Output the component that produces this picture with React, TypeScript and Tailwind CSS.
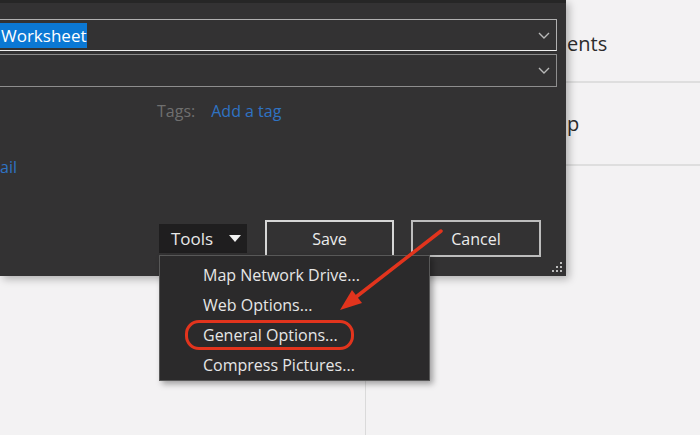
import React from "react";

const menuItems = ["Map Network Drive...", "Web Options...", "General Options...", "Compress Pictures..."];

function Chevron() {
  return (
    <svg width="12" height="7" viewBox="0 0 12 7" className="shrink-0">
      <path d="M1 1l5 5 5-5" fill="none" stroke="#b8b8b8" strokeWidth="1.4" />
    </svg>
  );
}

function Dialog() {
  return (
    <div className="relative z-10 h-[276px] bg-[#333233] shadow-[3px_3px_8px_rgba(0,0,0,0.28)] flex flex-col text-[#e8e8e8]">
      <div className="h-[3px] bg-[#262626]" />
      <div className="mt-[16px] -ml-px w-[558px] h-[32px] border border-[#b0b0b0] border-b-[#f2f2f2] flex items-center justify-between pr-[6px]">
        <span className="bg-[#0b78d4] text-white text-[17px] leading-[25px] pl-[1px] pr-[1px]">Worksheet</span>
        <Chevron />
      </div>
      <div className="mt-[3px] -ml-px w-[558px] h-[33px] border border-[#8e8e8e] flex items-center justify-end pr-[6px]">
        <Chevron />
      </div>
      <div className="mt-[12px] ml-[157px] flex items-center gap-[16px] h-[24px] text-[16px]">
        <span className="text-[#6f6f6f]">Tags:</span>
        <span className="text-[#2f73c4]">Add a tag</span>
      </div>
      <div className="mt-[32px] h-[24px] flex items-center text-[16px] text-[#2f73c4]">ail</div>
      <div className="mt-[41px] flex items-center">
        <div className="ml-[159px] w-[88px] h-[29px] bg-[#1f1e1f] flex items-center justify-between pl-[12px] pr-[6px] text-[17px]">
          <span>Tools</span>
          <svg width="12" height="7" viewBox="0 0 12 7">
            <path d="M0 0h12L6 7z" fill="#f2f2f2" />
          </svg>
        </div>
        <button className="ml-[18px] w-[129px] h-[37px] border-2 border-[#d6d6d6] text-[16px] text-[#ececec]">Save</button>
        <button className="ml-[17px] w-[130px] h-[37px] border-2 border-[#bdbdbd] text-[16px] text-[#ececec]">Cancel</button>
      </div>
      <svg width="11" height="11" viewBox="0 0 11 11" className="absolute right-[3px] bottom-[3px]">
        <g fill="#bdbdbd">
          <rect x="8" y="0" width="2" height="2" />
          <rect x="4" y="4" width="2" height="2" />
          <rect x="8" y="4" width="2" height="2" />
          <rect x="0" y="8" width="2" height="2" />
          <rect x="4" y="8" width="2" height="2" />
          <rect x="8" y="8" width="2" height="2" />
        </g>
      </svg>
    </div>
  );
}

export default function App() {
  return (
    <div className="relative w-[700px] h-[435px] overflow-hidden bg-[#f3f2f3] flex font-['Open_Sans','Liberation_Sans',sans-serif]">
      <div className="w-[566px] shrink-0 flex flex-col">
        <Dialog />
        <div className="flex-1 w-[366px] border-r border-[#dadada]" />
      </div>
      <div className="flex-1 flex flex-col text-[20px] text-[#2c2c2c]">
        <div className="h-[83px] border-b-2 border-[#dedede] flex items-center pt-[6px]">
          <span className="pl-px">ents</span>
        </div>
        <div className="h-[83px] border-b-2 border-[#dedede] flex items-center">
          <span className="pl-px">p</span>
        </div>
      </div>

      <div className="absolute z-20 left-[159px] top-[255px] w-[271px] h-[126px] bg-[#2b2a2b] border border-[#585858] shadow-[3px_3px_6px_rgba(0,0,0,0.35)] pt-[4px] text-[16px] text-[#e6e6e6]">
        {menuItems.map((item) =>
          item === "General Options..." ? (
            <div key={item} className="h-[30px] flex items-center pl-[25px]">
              <span className="h-[30px] flex items-center border-[3px] border-[#e2341d] rounded-[14px] pl-[15px] pr-[13px]">{item}</span>
            </div>
          ) : (
            <div key={item} className="h-[30px] flex items-center pl-[43px]">
              {item}
            </div>
          )
        )}
      </div>

      <svg className="absolute inset-0 z-30 pointer-events-none" width="700" height="435" viewBox="0 0 700 435">
        <line x1="441" y1="231" x2="356" y2="297" stroke="#e2341d" strokeWidth="3.5" strokeLinecap="round" />
        <polygon points="340,310 362,303 352,290" fill="#e2341d" />
      </svg>
    </div>
  );
}
